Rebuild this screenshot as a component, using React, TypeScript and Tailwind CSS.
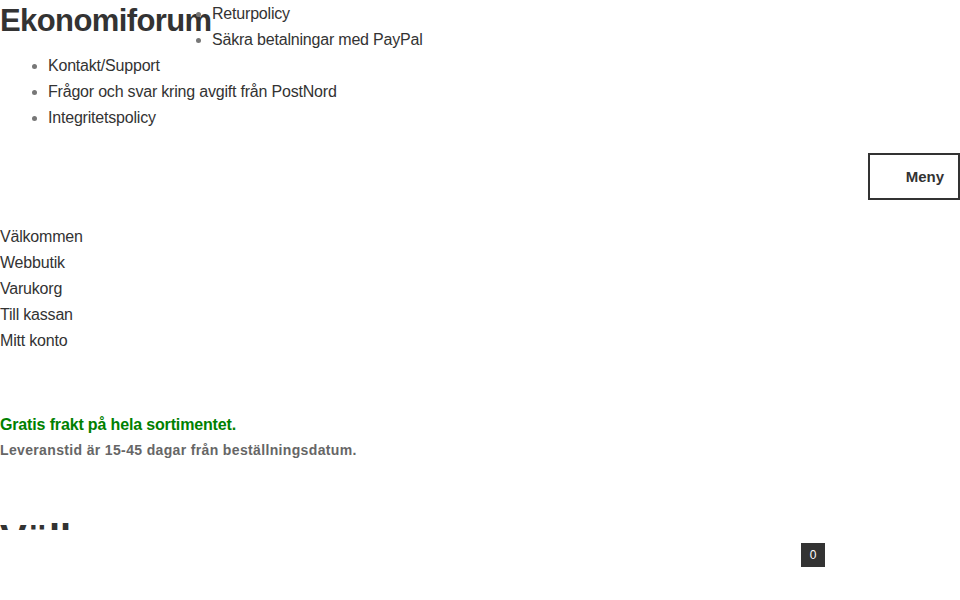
import React from "react";

const topLinks = [
  "Returpolicy",
  "Säkra betalningar med PayPal",
  "Kontakt/Support",
  "Frågor och svar kring avgift från PostNord",
  "Integritetspolicy",
];

const navLinks = ["Välkommen", "Webbutik", "Varukorg", "Till kassan", "Mitt konto"];

export default function App() {
  return (
    <div className="w-[960px] h-[600px] bg-white text-[#333] font-['Liberation_Sans',Arial,sans-serif] relative">
      <div className="h-[530px] overflow-hidden pt-px">
        <header>
          <h1 className="float-left w-[212px] text-[31px] leading-[40px] font-bold tracking-[-0.6px] m-0 whitespace-nowrap">
            Ekonomiforum
          </h1>
          <ul className="list-disc pl-12 text-base leading-[26px] tracking-[-0.2px] marker:text-[#777]">
            {topLinks.map((l, i) => (
              <li key={i}>
                <a href="#">{l}</a>
              </li>
            ))}
          </ul>
          <div className="clear-both flex justify-end mt-[22px]">
            <button className="w-[92px] h-[47px] border-2 border-[#333] flex items-center justify-end pr-[14px] text-[15px] leading-none font-bold">
              Meny
            </button>
          </div>
        </header>

        <nav className="mt-[24px] text-base leading-[26px] tracking-[-0.2px]">
          {navLinks.map((l, i) => (
            <div key={i}>
              <a href="#">{l}</a>
            </div>
          ))}
        </nav>

        <div className="mt-[59px]">
          <p className="text-base leading-[24px] font-bold tracking-[-0.15px] text-[#008000]">
            Gratis frakt på hela sortimentet.
          </p>
          <p className="text-sm leading-[26px] font-bold tracking-[0.35px] text-[#666]">
            Leveranstid är 15-45 dagar från beställningsdatum.
          </p>
        </div>

        <h2 className="mt-[52px] text-[40px] leading-[48px] font-bold">Välkommen</h2>
      </div>

      <div className="absolute left-[801px] top-[543px] w-6 h-6 bg-[#333] text-white text-xs flex items-center justify-center">
        0
      </div>
    </div>
  );
}
